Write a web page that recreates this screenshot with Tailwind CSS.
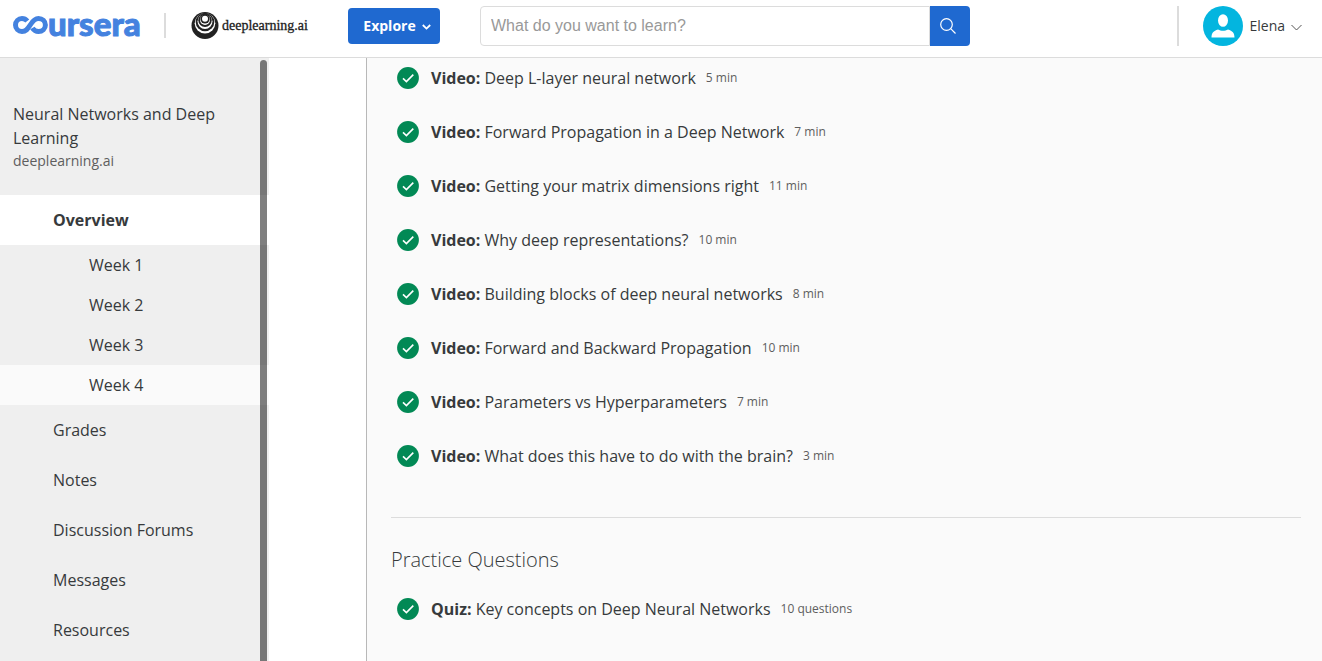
<!DOCTYPE html>
<html lang="en">
<head>
<meta charset="utf-8">
<title>Neural Networks and Deep Learning | Coursera</title>
<script src="https://cdn.jsdelivr.net/npm/@tailwindcss/browser@4"></script>
</head>
<body class="flex h-screen flex-col overflow-hidden bg-white font-['Open_Sans',sans-serif] text-base text-[#373a3c]">
<svg class="hidden" aria-hidden="true">
  <symbol id="done" viewBox="0 0 22 22"><circle cx="11" cy="11" r="10.9" fill="#028955"/><path d="M6 11.4l3.4 3.2 6.9-7" fill="none" stroke="#fff" stroke-width="1.6"/></symbol>
</svg>

<header class="flex h-[58px] shrink-0 items-start border-b border-[#dcdcdc] pr-5 pl-[13px]">
  <a href="#" aria-label="Coursera" class="flex h-[46px] w-[127px] items-center text-[#4482df]">
    <svg class="mt-[3px] h-[18px] w-[35px] shrink-0" viewBox="0 0 35 18" fill="none" stroke="currentColor" stroke-width="5"><path d="M14.300 5C12.800 3.200 11 2.500 9 2.500C5.300 2.500 2.500 5.400 2.500 9C2.500 12.600 5.300 15.500 9 15.500C13.200 15.500 14.800 12.700 17.200 9C19.500 5.300 21.500 2.500 25.500 2.500C29.400 2.500 32.400 5.400 32.400 9C32.400 12.600 29.400 15.500 25.500 15.500C22.800 15.500 20.800 14.300 19.400 12"/></svg>
    <span class="font-['Lato'] text-[33px] leading-8 font-black [-webkit-text-stroke:1px_#4482df]">ursera</span>
  </a>
  <div class="mt-[13px] ml-6 h-[25px] w-[2px] bg-[#dcdcdc]"></div>
  <a href="#" class="mt-3 ml-[25px] flex h-7 w-[117px] items-center gap-[3px] text-[#1c1c1c]">
    <svg class="size-7 shrink-0" viewBox="0 0 28 28"><circle cx="14" cy="13.500" r="13.500" fill="#222"/><circle cx="14" cy="11.300" r="10.300" fill="#fff"/><circle cx="14" cy="10" r="9.300" fill="#222"/><circle cx="14" cy="9.400" r="7.500" fill="#fff"/><circle cx="14" cy="8.300" r="6.700" fill="#222"/><circle cx="14" cy="7.900" r="5" fill="#fff"/><circle cx="14" cy="7" r="4.600" fill="#222"/><circle cx="14" cy="6.800" r="3" fill="#fff"/></svg>
    <span class="font-['Liberation_Serif'] text-sm [-webkit-text-stroke:0.3px_#1c1c1c]">deeplearning.ai</span>
  </a>
  <button type="button" class="mt-2 ml-10 flex h-9 w-[92px] items-center justify-center gap-[6px] rounded-sm bg-[#1f69d0] pl-[6px] text-sm font-bold text-white">Explore
    <svg class="mt-[2px] h-[6px] w-[9px]" viewBox="0 0 9 6" fill="none" stroke="currentColor" stroke-width="1.800"><path d="M.8 1l3.700 3.600L8.200 1"/></svg>
  </button>
  <form class="mt-[6px] ml-10 flex h-10 w-[490px]">
    <input type="text" aria-label="Search" placeholder="What do you want to learn?" class="min-w-0 flex-1 rounded-l-sm border border-[#dcdcdc] px-[10px] font-['Liberation_Sans'] text-base placeholder:text-[#999]">
    <button type="button" aria-label="Search" class="flex w-10 items-center justify-center rounded-r-sm bg-[#1f69d0] pr-1">
      <svg class="size-4" viewBox="0 0 16 16" fill="none" stroke="#fff" stroke-width="1.200"><circle cx="6.500" cy="6.500" r="5.800"/><path d="M10.700 10.700l4.800 4.800"/></svg>
    </button>
  </form>
  <div class="mt-[6px] ml-auto h-10 w-[2px] bg-[#dcdcdc]"></div>
  <button type="button" class="mt-[6px] ml-6 flex h-10 items-center text-sm">
    <svg class="size-10" viewBox="0 0 40 40"><circle cx="20" cy="20" r="20" fill="#03b5df"/><ellipse cx="20" cy="14.500" rx="5" ry="6.300" fill="#fff"/><path d="M8.500 31.500c0-5 2-6.500 6.500-8.100 3 1.800 7 1.800 10 0 4.500 1.600 6.500 3.100 6.500 8.100z" fill="#fff"/></svg>
    <span class="ml-[6px]">Elena</span>
    <svg class="mt-[2px] ml-[6px] h-[7px] w-[11px]" viewBox="0 0 11 7" fill="none" stroke="#555" stroke-width="1"><path d="M.5 1l5 5 5-5"/></svg>
  </button>
</header>

<div class="flex min-h-0 flex-1">
  <aside class="relative w-[269px] shrink-0 overflow-hidden bg-[#efefef]">
    <div class="px-[13px] pt-11 pb-6">
      <h1 class="text-base leading-6">Neural Networks and Deep Learning</h1>
      <p class="text-sm leading-[21px] text-[#5e5e5e]">deeplearning.ai</p>
    </div>
    <nav class="flex flex-col leading-[50px]">
      <a href="#" class="bg-white pl-[53px] font-bold">Overview</a>
      <a href="#" class="pl-[89px] leading-10">Week 1</a>
      <a href="#" class="pl-[89px] leading-10">Week 2</a>
      <a href="#" class="pl-[89px] leading-10">Week 3</a>
      <a href="#" class="bg-[#fafafa] pl-[89px] leading-10">Week 4</a>
      <a href="#" class="pl-[53px]">Grades</a>
      <a href="#" class="pl-[53px]">Notes</a>
      <a href="#" class="pl-[53px]">Discussion Forums</a>
      <a href="#" class="pl-[53px]">Messages</a>
      <a href="#" class="pl-[53px]">Resources</a>
    </nav>
    <div class="absolute top-[2px] right-[2px] -bottom-2 w-[7px] rounded-full bg-black/50"></div>
  </aside>

  <main class="ml-[97px] min-w-0 flex-1 overflow-hidden border-l border-[#b8b8b8] bg-[#fafafa] pr-[21px] pl-6">
    <ul class="flex flex-col gap-8 border-b border-[#dcdcdc] pt-[9px] pb-[50px] pl-[6px] leading-[22px]">
      <li><a href="#" class="flex items-center"><svg class="mr-3 size-[22px]"><use href="#done"/></svg><span><strong>Video:</strong> Deep L-layer neural network</span><span class="ml-[10px] text-xs text-[#5e5e5e]">5 min</span></a></li>
      <li><a href="#" class="flex items-center"><svg class="mr-3 size-[22px]"><use href="#done"/></svg><span><strong>Video:</strong> Forward Propagation in a Deep Network</span><span class="ml-[10px] text-xs text-[#5e5e5e]">7 min</span></a></li>
      <li><a href="#" class="flex items-center"><svg class="mr-3 size-[22px]"><use href="#done"/></svg><span><strong>Video:</strong> Getting your matrix dimensions right</span><span class="ml-[10px] text-xs text-[#5e5e5e]">11 min</span></a></li>
      <li><a href="#" class="flex items-center"><svg class="mr-3 size-[22px]"><use href="#done"/></svg><span><strong>Video:</strong> Why deep representations?</span><span class="ml-[10px] text-xs text-[#5e5e5e]">10 min</span></a></li>
      <li><a href="#" class="flex items-center"><svg class="mr-3 size-[22px]"><use href="#done"/></svg><span><strong>Video:</strong> Building blocks of deep neural networks</span><span class="ml-[10px] text-xs text-[#5e5e5e]">8 min</span></a></li>
      <li><a href="#" class="flex items-center"><svg class="mr-3 size-[22px]"><use href="#done"/></svg><span><strong>Video:</strong> Forward and Backward Propagation</span><span class="ml-[10px] text-xs text-[#5e5e5e]">10 min</span></a></li>
      <li><a href="#" class="flex items-center"><svg class="mr-3 size-[22px]"><use href="#done"/></svg><span><strong>Video:</strong> Parameters vs Hyperparameters</span><span class="ml-[10px] text-xs text-[#5e5e5e]">7 min</span></a></li>
      <li><a href="#" class="flex items-center"><svg class="mr-3 size-[22px]"><use href="#done"/></svg><span><strong>Video:</strong> What does this have to do with the brain?</span><span class="ml-[10px] text-xs text-[#5e5e5e]">3 min</span></a></li>
    </ul>
    <h2 class="mt-7 text-xl leading-7 font-light">Practice Questions</h2>
    <ul class="mt-6 pl-[6px] leading-[22px]">
      <li><a href="#" class="flex items-center"><svg class="mr-3 size-[22px]"><use href="#done"/></svg><span><strong>Quiz:</strong> Key concepts on Deep Neural Networks</span><span class="ml-[10px] text-xs text-[#5e5e5e]">10 questions</span></a></li>
    </ul>
  </main>
</div>
</body>
</html>
